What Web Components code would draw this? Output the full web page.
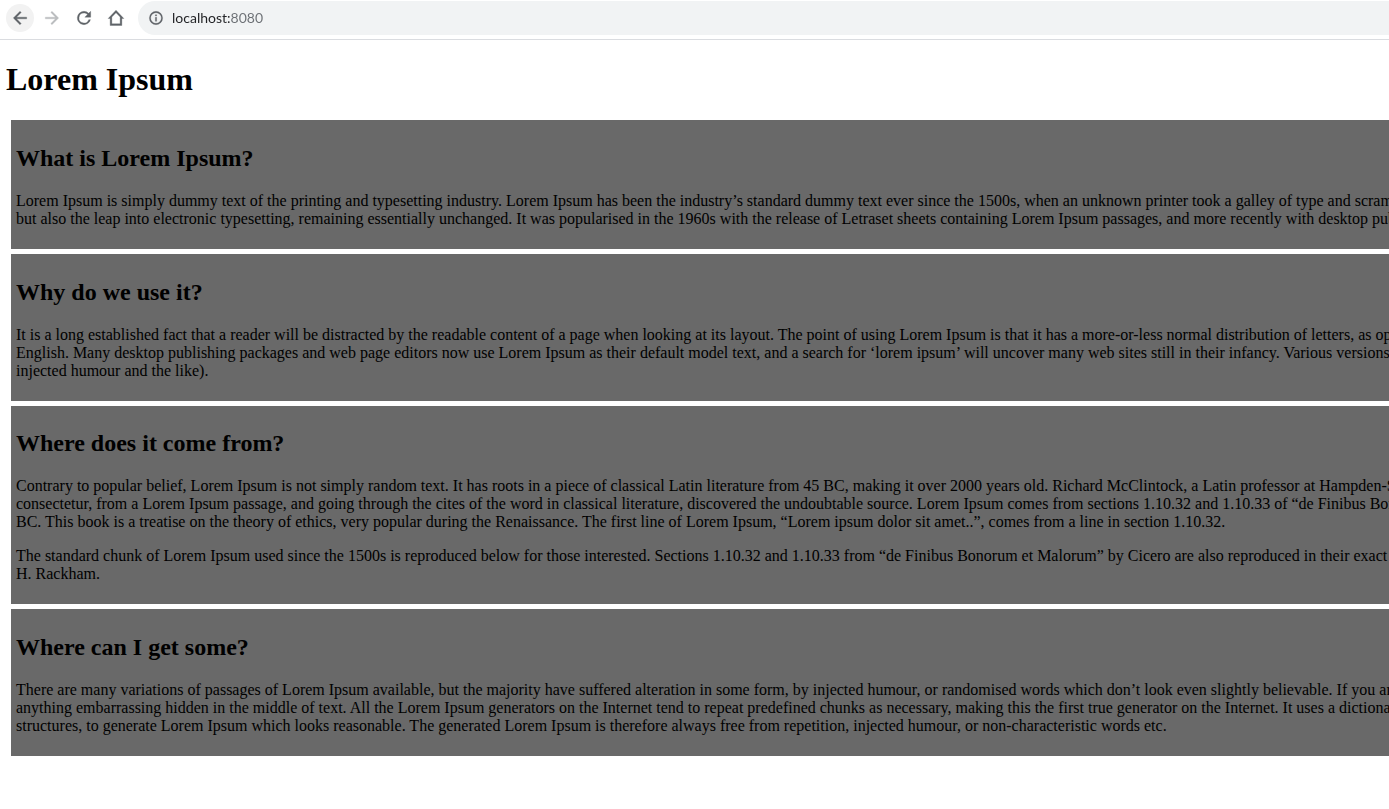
<!DOCTYPE html>
<html lang="en">
<head>
<meta charset="utf-8">
<title>Lorem Ipsum</title>
<style>
  body { margin: 0; background: #fff; color: #000; font: 16px/18px "Liberation Serif", serif; overflow-x: hidden; }
</style>
</head>
<body>
<browser-bar></browser-bar>
<lorem-page>
  <span slot="title">Lorem Ipsum</span>
  <lorem-card>
    <span slot="heading">What is Lorem Ipsum?</span>
    <p>Lorem Ipsum is simply dummy text of the printing and typesetting industry. Lorem Ipsum has been the industry’s standard dummy text ever since the 1500s, when an unknown printer took a galley of type and scrambled<br>but also the leap into electronic typesetting, remaining essentially unchanged. It was popularised in the 1960s with the release of Letraset sheets containing Lorem Ipsum passages, and more recently with desktop publishing</p>
  </lorem-card>
  <lorem-card>
    <span slot="heading">Why do we use it?</span>
    <p>It is a long established fact that a reader will be distracted by the readable content of a page when looking at its layout. The point of using Lorem Ipsum is that it has a more-or-less normal distribution of letters, as opposed<br>English. Many desktop publishing packages and web page editors now use Lorem Ipsum as their default model text, and a search for ‘lorem ipsum’ will uncover many web sites still in their infancy. Various versions<br>injected humour and the like).</p>
  </lorem-card>
  <lorem-card>
    <span slot="heading">Where does it come from?</span>
    <p>Contrary to popular belief, Lorem Ipsum is not simply random text. It has roots in a piece of classical Latin literature from 45 BC, making it over 2000 years old. Richard McClintock, a Latin professor at Hampden-Sydney<br>consectetur, from a Lorem Ipsum passage, and going through the cites of the word in classical literature, discovered the undoubtable source. Lorem Ipsum comes from sections 1.10.32 and 1.10.33 of “de Finibus Bonorum<br>BC. This book is a treatise on the theory of ethics, very popular during the Renaissance. The first line of Lorem Ipsum, “Lorem ipsum dolor sit amet..”, comes from a line in section 1.10.32.</p>
    <p>The standard chunk of Lorem Ipsum used since the 1500s is reproduced below for those interested. Sections 1.10.32 and 1.10.33 from “de Finibus Bonorum et Malorum” by Cicero are also reproduced in their exact<br>H. Rackham.</p>
  </lorem-card>
  <lorem-card>
    <span slot="heading">Where can I get some?</span>
    <p>There are many variations of passages of Lorem Ipsum available, but the majority have suffered alteration in some form, by injected humour, or randomised words which don’t look even slightly believable. If you are<br>anything embarrassing hidden in the middle of text. All the Lorem Ipsum generators on the Internet tend to repeat predefined chunks as necessary, making this the first true generator on the Internet. It uses a dictionary<br>structures, to generate Lorem Ipsum which looks reasonable. The generated Lorem Ipsum is therefore always free from repetition, injected humour, or non-characteristic words etc.</p>
  </lorem-card>
</lorem-page>

<script>
class ShadowElement extends HTMLElement {
  constructor() {
    super();
    this.attachShadow({ mode: "open" }).innerHTML = this.constructor.markup;
  }
}

const ICONS = {
  back: "M20 11H7.83l5.59-5.59L12 4l-8 8 8 8 1.41-1.41L7.83 13H20v-2z",
  forward: "M12 4l-1.41 1.41L16.17 11H4v2h12.17l-5.58 5.59L12 20l8-8z",
  reload: "M17.65 6.35A7.96 7.96 0 0 0 12 4a8 8 0 1 0 7.73 10h-2.08A6 6 0 1 1 12 6c1.66 0 3.14.69 4.22 1.78L13 11h7V4l-2.35 2.35z",
  home: "M12 2.6L2.6 12.6H5V21h14v-8.400h2.400zM12 5.600l5 5.300V19H7v-8.100z",
  info: "M11 7h2v2h-2zm0 4h2v6h-2zm1-9a10 10 0 1 0 0 20 10 10 0 0 0 0-20zm0 18a8 8 0 1 1 0-16 8 8 0 0 1 0 16z"
};

class ToolIcon extends HTMLElement {
  constructor() {
    super();
    this.attachShadow({ mode: "open" });
  }
  connectedCallback() {
    this.shadowRoot.innerHTML = `
      <style>
        :host { display: block; flex: none; width: 20px; height: 20px; }
        svg { display: block; width: 100%; height: 100%; fill: currentColor; stroke: currentColor; stroke-width: .4; }
      </style>
      <svg viewBox="0 0 24 24" fill-rule="evenodd" aria-hidden="true"><path d="${ICONS[this.getAttribute("name")]}"/></svg>`;
  }
}

class BrowserBar extends ShadowElement {
  static markup = `
    <style>
      :host { display: flex; align-items: center; gap: 4px; box-sizing: border-box; height: 40px;
              padding: 0 0 4px 6px; border-bottom: 1px solid #dadce0; background: #fff; color: #5f6368; }
      button { display: grid; place-items: center; flex: none; width: 28px; height: 28px; padding: 0;
               border: 0; border-radius: 50%; background: none; color: inherit; }
      button.active { background: #f2f2f2; }
      button:disabled { color: #babcbe; }
      .address { display: flex; align-items: center; flex: 1; gap: 8px; min-width: 0; height: 34px;
                 box-sizing: border-box; margin-left: 4px; padding-left: 10px;
                 border-radius: 17px 0 0 17px; background: #f1f3f4; }
      .address tool-icon { width: 16px; height: 16px; }
      input { flex: 1; min-width: 0; padding: 0; border: 0; outline: 0; font: 14px/20px Lato, sans-serif;
              color: transparent; background: linear-gradient(90deg, #202124 58px, #6b6f74 58px) text; }
    </style>
    <button class="active" aria-label="Back"><tool-icon name="back"></tool-icon></button>
    <button disabled aria-label="Forward"><tool-icon name="forward"></tool-icon></button>
    <button aria-label="Reload"><tool-icon name="reload"></tool-icon></button>
    <button aria-label="Home"><tool-icon name="home"></tool-icon></button>
    <label class="address"><tool-icon name="info"></tool-icon><input type="text" aria-label="Address" value="localhost:8080"></label>`;
}

class LoremPage extends ShadowElement {
  static markup = `
    <style>
      :host { display: flow-root; padding-left: 6px; overflow: hidden; }
      h1 { margin-left: 0; font-size: 32px; line-height: 37px; }
      main { display: grid; grid-template-columns: minmax(0, 1fr); gap: 5px; padding-left: 5px; }
    </style>
    <h1><slot name="title"></slot></h1>
    <main><slot></slot></main>`;
}

class LoremCard extends ShadowElement {
  static markup = `
    <style>
      :host { display: flow-root; padding: 5px; background: #696969; white-space: nowrap; }
      h2 { font-size: 24px; line-height: 27px; }
      ::slotted(p) { margin: 0 0 16px; }
    </style>
    <section><h2><slot name="heading"></slot></h2><slot></slot></section>`;
}

customElements.define("tool-icon", ToolIcon);
customElements.define("browser-bar", BrowserBar);
customElements.define("lorem-page", LoremPage);
customElements.define("lorem-card", LoremCard);
</script>
</body>
</html>
